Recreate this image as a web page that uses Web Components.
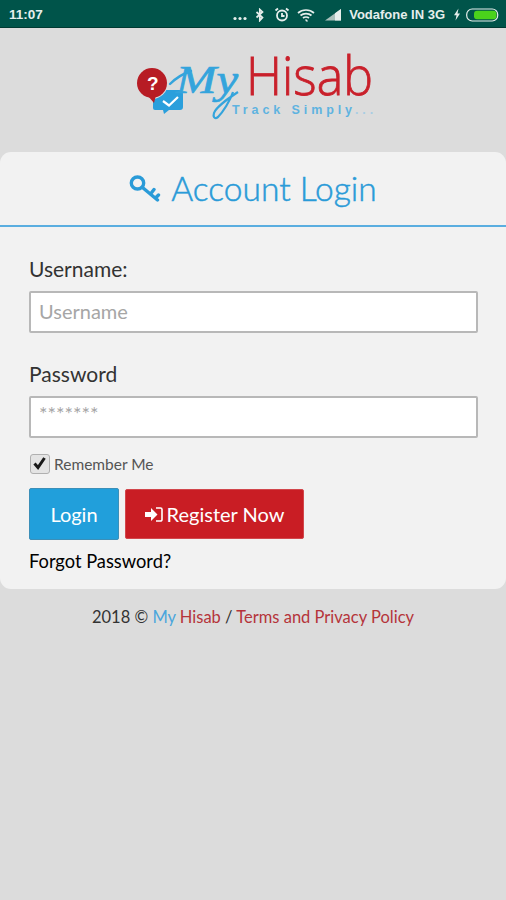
<!DOCTYPE html>
<html>
<head>
<meta charset="utf-8">
<title>My Hisab</title>
<style>
  html, body { margin: 0; padding: 0; }
  body {
    width: 506px;
    height: 900px;
    overflow: hidden;
    background: #dcdcdc;
    font-family: Lato, "Open Sans", sans-serif;
  }
</style>
</head>
<body>
<status-bar></status-bar>
<brand-logo></brand-logo>
<login-card>
  <form-field label="Username:" placeholder="Username"></form-field>
  <form-field label="Password" placeholder="*******" class="pass"></form-field>
  <remember-me></remember-me>
  <login-actions></login-actions>
</login-card>
<page-footer></page-footer>

<script>
class StatusBar extends HTMLElement {
  constructor() {
    super();
    this.attachShadow({ mode: 'open' });
    this.shadowRoot.innerHTML = `
<style>
  :host {
    display: flex;
    align-items: center;
    height: 28px;
    box-sizing: border-box;
    padding: 2px 7px 0 9px;
    background: #00544a;
    border-bottom: 1px solid #003a32;
    color: #e6eeec;
    font: 700 13.500px "Liberation Sans", sans-serif;
  }
  .time { flex: 1; }
  .icons { display: flex; align-items: center; }
  svg { display: block; }
  .net { margin: 0 8px 0 7px; font-size: 13px; }
</style>
<span class="time">11:07</span>
<div class="icons">
  <svg width="16" height="14" viewBox="0 0 16 14" style="margin-right:7px"><g fill="#e6eeec"><circle cx="3" cy="10.500" r="1.600"/><circle cx="8" cy="10.500" r="1.600"/><circle cx="13" cy="10.500" r="1.600"/></g></svg>
  <svg width="10" height="14" viewBox="0 0 10 14" style="margin-right:9px"><path d="M1.500 4l6 5.500L4.800 12.500V1.500L7.500 4l-6 5.500" fill="none" stroke="#e6eeec" stroke-width="1.700"/></svg>
  <svg width="16" height="15" viewBox="0 0 16 15" style="margin-right:7px"><g fill="none" stroke="#e6eeec" stroke-width="1.800"><circle cx="8" cy="8.500" r="5"/><path d="M8 6v3h2.500M1.500 3.500l2.500-2M14.500 3.500l-2.500-2"/></g></svg>
  <svg width="18" height="14" viewBox="0 0 18 14" style="margin-right:9px"><g fill="none" stroke="#e6eeec" stroke-width="1.700"><path d="M1 5c4.500-4 11.500-4 16 0M3.500 7.500c3-2.600 8-2.600 11 0M6 10c1.600-1.300 4.400-1.300 6 0"/></g><path d="M8 11.500h2l1 2H9z" fill="#e6eeec"/></svg>
  <svg width="18" height="13" viewBox="0 0 18 13"><path d="M1 12.500L17 1v11.500z" fill="#a9c0bb"/><path d="M11 5.300L17 1v11.500h-6z" fill="#e6eeec"/></svg>
  <span class="net">Vodafone IN 3G</span>
  <svg width="8" height="13" viewBox="0 0 8 13" style="margin-right:5px"><path d="M5.500 .5L1 7.200h2.500L2.500 12.500 7 5.500H4.500z" fill="#e6eeec"/></svg>
  <svg width="33" height="14" viewBox="0 0 33 14"><rect x=".7" y="1" width="31" height="12" rx="5.500" fill="none" stroke="#e6eeec" stroke-width="1.200"/><rect x="8" y="2.700" width="22.500" height="8.600" rx="3" fill="#4ad21c"/></svg>
</div>`;
  }
}

class BrandLogo extends HTMLElement {
  constructor() {
    super();
    this.attachShadow({ mode: 'open' });
    this.shadowRoot.innerHTML = `
<style>
  :host { display: block; height: 124px; }
  svg { display: block; }
  .hisab { font: 300 53px "Open Sans", sans-serif; fill: #c9202b; stroke: #c9202b; stroke-width: .8px; }
  .my { font: italic 400 41px "Liberation Serif", serif; fill: #34a4dc; stroke: #34a4dc; stroke-width: .7px; }
  .tag { font: 700 12.500px "Liberation Sans", sans-serif; fill: #5fb3e0; letter-spacing: 3.900px; }
  .dots { fill: #a8cde4; }
</style>
<svg width="506" height="124" viewBox="0 28 506 124">
  <path d="M153 90h26a4 4 0 0 1 4 4v13a3 3 0 0 1-3 3h-11l-5 4-1-4h-8a2 2 0 0 1-2-2z" fill="#2a9fdc"/>
  <path d="M163 101l6 4.500 9-8.500" fill="none" stroke="#fff" stroke-width="2.200"/>
  <circle cx="152" cy="83" r="16" fill="#dcdcdc"/>
  <circle cx="152" cy="83" r="15" fill="#b71c24"/>
  <path d="M148 96l6 7 2-8z" fill="#b71c24"/>
  <text x="147" y="90" font-family="Liberation Sans" font-weight="700" font-size="19" fill="#fff">?</text>
  <path d="M170 84c5-5 12-10 21-13" fill="none" stroke="#34a4dc" stroke-width="2.400" stroke-linecap="round"/>
  <text class="my" x="176" y="93" textLength="62" lengthAdjust="spacingAndGlyphs">My</text>
  <path d="M233 92c-3 9-10 20-15 25-4 3-5-1-4-4 2-6 12-13 24-21" fill="none" stroke="#34a4dc" stroke-width="2.200"/>
  <text class="hisab" x="246" y="95" textLength="127" lengthAdjust="spacingAndGlyphs">Hisab</text>
  <text class="tag" x="232" y="114">Track Simply<tspan class="dots">...</tspan></text>
</svg>`;
  }
}

class LoginCard extends HTMLElement {
  constructor() {
    super();
    this.attachShadow({ mode: 'open' });
    this.shadowRoot.innerHTML = `
<style>
  :host {
    display: block;
    background: #f2f2f2;
    border-radius: 11px;
    font-family: Lato, sans-serif;
  }
  header {
    display: flex;
    align-items: center;
    justify-content: center;
    gap: 10px;
    height: 75px;
    box-sizing: border-box;
    padding-bottom: 2px;
    border-bottom: 2px solid #5aaee0;
    color: #2a9bd8;
    font-size: 33.500px;
    font-weight: 300;
    -webkit-text-stroke: .5px #2a9bd8;
  }
  svg { display: block; }
  .body { padding: 30px 28px 17px 29px; }
</style>
<header>
  <svg width="32" height="28" viewBox="0 0 32 28"><g fill="none" stroke="#2a9bd8" stroke-linecap="round" stroke-width="3.400"><ellipse cx="8.500" cy="9" rx="6.200" ry="6"/><path d="M13.500 13.500l15 12.500M21.500 20l3.500-4.500M26.500 24l3-3"/></g></svg>
  <span>Account Login</span>
</header>
<div class="body"><slot></slot></div>`;
  }
}

class FormField extends HTMLElement {
  constructor() {
    super();
    this.attachShadow({ mode: 'open' });
    this.shadowRoot.innerHTML = `
<style>
  :host { display: block; margin-bottom: 29px; font-family: Lato, sans-serif; }
  label { display: block; color: #333; font-size: 21px; line-height: 24px; margin-bottom: 10px; }
  input {
    display: block;
    width: 100%;
    height: 42px;
    box-sizing: border-box;
    margin: 0;
    padding: 0 8px 3px;
    border: 2px solid #b8b8b8;
    border-radius: 2px;
    background: #fff;
    font: 20px Lato, sans-serif;
    outline: none;
  }
  input::placeholder { color: #a6a6a6; opacity: 1; }
  :host(.pass) input { padding-bottom: 8px; }
</style>
<label></label>
<input type="text">`;
    this.shadowRoot.querySelector('label').textContent = this.getAttribute('label');
    this.shadowRoot.querySelector('input').placeholder = this.getAttribute('placeholder');
  }
}

class RememberMe extends HTMLElement {
  constructor() {
    super();
    this.attachShadow({ mode: 'open' });
    this.shadowRoot.innerHTML = `
<style>
  :host {
    display: flex;
    align-items: center;
    gap: 4px;
    margin: -13px 0 14px 1px;
    color: #555;
    font: 15.500px Lato, sans-serif;
  }
  .box {
    width: 20px;
    height: 20px;
    box-sizing: border-box;
    border: 1.500px solid #b0b0b0;
    border-radius: 3px;
    background: #e4e4e4;
  }
  svg { display: block; }
</style>
<div class="box"><svg width="17" height="17" viewBox="0 0 17 17"><path d="M3.500 8.500l3.500 4 6.500-9.500" fill="none" stroke="#1a1a1a" stroke-width="3"/></svg></div>
<span>Remember Me</span>`;
  }
}

class LoginActions extends HTMLElement {
  constructor() {
    super();
    this.attachShadow({ mode: 'open' });
    this.shadowRoot.innerHTML = `
<style>
  :host { display: block; font-family: Lato, sans-serif; }
  .row { display: flex; align-items: center; gap: 6px; }
  button {
    display: flex;
    align-items: center;
    justify-content: center;
    gap: 4px;
    margin: 0;
    padding: 0;
    color: #fff;
    font: 20px Lato, sans-serif;
    border-radius: 2px;
  }
  .login { width: 90px; height: 52px; background: #219fdb; border: 1px solid #3c8fb8; }
  .register { width: 179px; height: 50px; background: #c91d24; border: 1px solid #d2474c; }
  svg { display: block; }
  a { display: block; margin-top: 10px; color: #000; font-size: 18.300px; line-height: 22px; }
</style>
<div class="row">
  <button class="login">Login</button>
  <button class="register">
    <svg width="18" height="15" viewBox="0 0 18 15"><path d="M0 5h6V1l6.500 6.500L6 14v-4H0z" fill="#fff"/><path d="M11 1h4.500A1.500 1.500 0 0 1 17 2.500v10a1.500 1.500 0 0 1-1.500 1.500H11" fill="none" stroke="#fff" stroke-width="1.600"/></svg>
    <span>Register Now</span>
  </button>
</div>
<a>Forgot Password?</a>`;
  }
}

class PageFooter extends HTMLElement {
  constructor() {
    super();
    this.attachShadow({ mode: 'open' });
    this.shadowRoot.innerHTML = `
<style>
  :host {
    display: block;
    margin-top: 17px;
    text-align: center;
    color: #333;
    font: 16.500px/22px Lato, sans-serif;
  }
  .blue { color: #4aa6dc; }
  .red { color: #b5343a; }
</style>
<span>2018 © <span class="blue">My</span> <span class="red">Hisab</span> / <span class="red">Terms and Privacy Policy</span></span>`;
  }
}

customElements.define('status-bar', StatusBar);
customElements.define('brand-logo', BrandLogo);
customElements.define('login-card', LoginCard);
customElements.define('form-field', FormField);
customElements.define('remember-me', RememberMe);
customElements.define('login-actions', LoginActions);
customElements.define('page-footer', PageFooter);
</script>
</body>
</html>
